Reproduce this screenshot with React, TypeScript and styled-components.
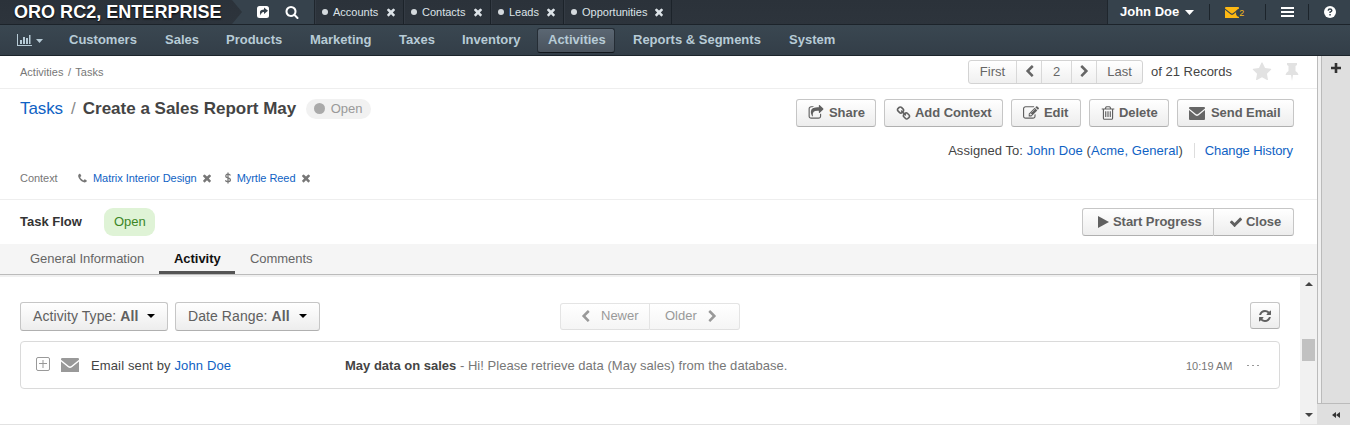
import React from "react";
import styled, { createGlobalStyle } from "styled-components";

const Global = createGlobalStyle`
  * { box-sizing: border-box; }
  body {
    margin: 0;
    background: #fff;
    font: 13px/18px "Liberation Sans", Arial, sans-serif;
    color: #444;
    overflow: hidden;
  }
`;

/* ---------- icons ---------- */

const paths = {
  times: "M1490 1322q0 40-28 68l-136 136q-28 28-68 28t-68-28l-294-294-294 294q-28 28-68 28t-68-28l-136-136q-28-28-28-68t28-68l294-294-294-294q-28-28-28-68t28-68l136-136q28-28 68-28t68 28l294 294 294-294q28-28 68-28t68 28l136 136q28 28 28 68t-28 68l-294 294 294 294q28 28 28 68z",
  star: "M1728 647q0 22-26 48l-363 354 86 500q1 7 1 20 0 21-10.5 35.5t-30.5 14.5q-19 0-40-12l-449-236-449 236q-22 12-40 12-21 0-31.5-14.5t-10.5-35.5q0-6 2-20l86-500-364-354q-25-27-25-48 0-37 56-46l502-73 225-455q19-41 49-41t49 41l225 455 502 73q56 9 56 46z",
  search: "M1216 832q0-185-131.5-316.5t-316.5-131.5-316.5 131.5-131.5 316.5 131.5 316.5 316.5 131.5 316.5-131.5 131.5-316.5zm512 832q0 52-38 90t-90 38q-54 0-90-38l-343-342q-179 124-399 124-143 0-273.5-55.5t-225-150-150-225-55.5-273.5 55.5-273.5 150-225 225-150 273.5-55.5 273.5 55.5 225 150 150 225 55.5 273.5q0 220-124 399l343 343q37 37 37 90z",
  check: "M1671 566q0 40-28 68l-724 724-136 136q-28 28-68 28t-68-28l-136-136-362-362q-28-28-28-68t28-68l136-136q28-28 68-28t68 28l294 295 656-657q28-28 68-28t68 28l136 136q28 28 28 68z",
  phone: "M1600 1240q0 27-10 70.5t-21 68.5q-21 50-122 106-94 51-186 51-27 0-53-3.5t-57.5-12.5-47-14.5-55.5-20.5-49-18q-98-35-175-83-127-79-264-216t-216-264q-48-77-83-175-3-9-18-49t-20.5-55.5-14.5-47-12.5-57.5-3.5-53q0-92 51-186 56-101 106-122 25-11 68.5-21t70.5-10q14 0 21 3 18 6 53 76 11 19 30 54t35 63.5 31 53.5q3 4 17.5 25t21.5 35.5 7 28.5q0 20-28.5 50t-62 55-62 53-28.5 46q0 9 5 22.5t8.5 20.5 14 24 11.5 19q76 137 174 235t235 174q2 1 19 11.5t24 14 20.5 8.5 22.5 5q18 0 46-28.5t53-62 55-62 50-28.5q14 0 28.5 7t35.5 21.5 25 17.5q25 15 53.5 31t63.5 35 54 30q70 35 76 53 3 7 3 21z",
  left: "M1427 301l-531 531 531 531q19 19 19 45t-19 45l-166 166q-19 19-45 19t-45-19l-742-742q-19-19-19-45t19-45l742-742q19-19 45-19t45 19l166 166q19 19 19 45t-19 45z",
  right: "M1363 877l-742 742q-19 19-45 19t-45-19l-166-166q-19-19-19-45t19-45l531-531-531-531q-19-19-19-45t19-45l166-166q19-19 45-19t45 19l742 742q19 19 19 45t-19 45z",
  refresh: "M1639 1056q0 5-1 7-64 268-268 434.5t-478 166.5q-146 0-282.5-55t-243.5-157l-129 129q-19 19-45 19t-45-19-19-45v-448q0-26 19-45t45-19h448q26 0 45 19t19 45-19 45l-137 137q71 66 161 102t187 36q134 0 250-65t186-179q11-17 53-117 8-23 30-23h192q13 0 22.5 9.5t9.5 22.5zm25-800v448q0 26-19 45t-45 19h-448q-26 0-45-19t-19-45 19-45l138-138q-148-137-349-137-134 0-250 65t-186 179q-11 17-53 117-8 23-30 23h-199q-13 0-22.5-9.5t-9.5-22.5v-7q65-268 270-434.5t480-166.5q146 0 284 55.5t245 156.5l130-129q19-19 45-19t45 19 19 45z",
  trash: "M704 736v576q0 14-9 23t-23 9h-64q-14 0-23-9t-9-23v-576q0-14 9-23t23-9h64q14 0 23 9t9 23zm256 0v576q0 14-9 23t-23 9h-64q-14 0-23-9t-9-23v-576q0-14 9-23t23-9h64q14 0 23 9t9 23zm256 0v576q0 14-9 23t-23 9h-64q-14 0-23-9t-9-23v-576q0-14 9-23t23-9h64q14 0 23 9t9 23zm128 724v-948h-896v948q0 22 7 40.5t14.5 27 10.5 8.5h832q3 0 10.5-8.5t14.5-27 7-40.5zm-672-1076h448l-48-117q-7-9-17-11h-317q-10 2-17 11zm928 32v64q0 14-9 23t-23 9h-96v948q0 83-47 143.5t-113 60.5h-832q-66 0-113-58.5t-47-141.5v-952h-96q-14 0-23-9t-9-23v-64q0-14 9-23t23-9h309l70-167q15-37 54-63t79-26h320q40 0 79 26t54 63l70 167h309q14 0 23 9t9 23z",
  edit: "M888 1184l116-116-152-152-116 116v56h96v96h56zm440-720q-16-16-33 1l-350 350q-17 17-1 33t33-1l350-350q17-17 1-33zm80 594v190q0 119-84.5 203.5t-203.5 84.5h-832q-119 0-203.5-84.5t-84.5-203.5v-832q0-119 84.5-203.5t203.5-84.5h832q63 0 117 25 15 7 18 23 3 17-9 29l-49 49q-14 14-32 8-23-6-45-6h-832q-66 0-113 47t-47 113v832q0 66 47 113t113 47h832q66 0 113-47t47-113v-126q0-13 9-22l64-64q15-15 35-7t20 29zm-96-738l288 288-672 672h-288v-288zm444 132l-92 92-288-288 92-92q28-28 68-28t68 28l152 152q28 28 28 68t-28 68z",
  share: "M1472 989v259q0 119-84.5 203.5t-203.5 84.5h-832q-119 0-203.5-84.5t-84.5-203.5v-832q0-119 84.5-203.5t203.5-84.5h255q13 0 22.5 9.5t9.5 22.5q0 27-26 32-77 26-133 60-10 4-16 4h-112q-66 0-113 47t-47 113v832q0 66 47 113t113 47h832q66 0 113-47t47-113v-214q0-19 18-29 28-13 54-37 16-16 35-8 21 9 21 29zm237-496l-384 384q-18 19-45 19-12 0-25-5-39-17-39-59v-192h-160q-323 0-438 131-119 137-74 473 3 23-20 34-8 2-12 2-16 0-26-13-10-14-21-31t-39.5-68.5-49.5-99.5-38.5-114-17.5-122q0-49 3.5-91t14-90 28-88 47-81.5 68.5-74 94.5-61.5 124.5-48.5 159.5-30.5 196.5-11h160v-192q0-42 39-59 13-5 25-5 26 0 45 19l384 384q19 19 19 45t-19 45z",
  chain: "M1520 1216q0-40-28-68l-208-208q-28-28-68-28-42 0-72 32 3 3 19 18.5t21.5 21.5 15 19 13 25.5 3.5 27.5q0 40-28 68t-68 28q-15 0-27.5-3.5t-25.5-13-19-15-21.5-21.5-18.5-19q-33 31-33 73 0 40 28 68l206 207q27 27 68 27 40 0 68-26l147-146q28-28 28-67zm-703-705q0-40-28-68l-206-207q-28-28-68-28-39 0-68 27l-147 146q-28 28-28 67 0 40 28 68l208 208q27 27 68 27 42 0 72-31-3-3-19-18.5t-21.5-21.5-15-19-13-25.5-3.5-27.5q0-40 28-68t68-28q15 0 27.5 3.5t25.5 13 19 15 21.5 21.5 18.5 19q33-31 33-73zm895 705q0 120-85 203l-147 146q-83 83-203 83-121 0-204-85l-206-207q-83-83-83-203 0-123 88-209l-88-88q-86 88-208 88-120 0-204-84l-208-208q-84-84-84-204t85-203l147-146q83-83 203-83 121 0 204 85l206 207q83 83 83 203 0 123-88 209l88 88q86-88 208-88 120 0 204 84l208 208q84 84 84 204z",
};

const Svg = styled.svg<{ $ml?: number; $mr?: number; $mt?: number }>`
  display: block;
  flex: none;
  margin: ${(p) => p.$mt || 0}px ${(p) => p.$mr || 0}px 0 ${(p) => p.$ml || 0}px;
`;

type IconProps = { size?: number; color?: string; ml?: number; mr?: number; mt?: number };

const Icon = ({ name, size = 14, color = "currentColor", ml, mr, mt }: IconProps & { name: keyof typeof paths }) => (
  <Svg $ml={ml} $mr={mr} $mt={mt} width={size} height={size} viewBox="0 0 1792 1792" fill={color}>
    <path d={paths[name]} />
  </Svg>
);

const Envelope = ({ size = 16, color = "#666", ml, mr, mt }: IconProps) => (
  <Svg $ml={ml} $mr={mr} $mt={mt} width={size} height={(size * 13) / 16} viewBox="0 0 16 13" fill={color}>
    <path d="M1 0h14a1 1 0 0 1 1 1v.6L9.1 7.1Q8 7.9 6.900 7.1L0 1.600V1a1 1 0 0 1 1-1z" />
    <path d="M0 3.100l6.300 5.200q1.700 1.300 3.400 0L16 3.100V12a1 1 0 0 1-1 1H1a1 1 0 0 1-1-1z" />
  </Svg>
);

const Caret = ({ color = "#000", w = 8, h = 4, up, ml, mr, mt }: IconProps & { w?: number; h?: number; up?: boolean }) => (
  <Svg $ml={ml} $mr={mr} $mt={mt} width={w} height={h} viewBox="0 0 8 4" preserveAspectRatio="none" fill={color}>
    <path d={up ? "M0 4L4 0L8 4z" : "M0 0H8L4 4z"} />
  </Svg>
);

/* ---------- header ---------- */

const TopBar = styled.header`
  display: flex;
  height: 25px;
  background: linear-gradient(#2b323a, #2d343c);
  border-bottom: 1px solid #1c232a;
  color: #fff;
`;

const Logo = styled.div`
  width: 232px;
  padding-left: 14px;
  font: bold 18px/24px "Liberation Sans", Arial, sans-serif;
  letter-spacing: 0.03px;
  white-space: nowrap;
  text-shadow: 0 1px 2px #000;
`;

const QuickTools = styled.div`
  display: flex;
  align-items: center;
  width: 83px;
  padding-left: 24px;
  background: #36424c;
  border-right: 1px solid #1f262d;
  clip-path: polygon(0 0, 100% 0, 100% 100%, 0 100%, 10px 50%);
`;

const PinTab = styled.div<{ $w: number }>`
  display: flex;
  align-items: center;
  justify-content: space-between;
  width: ${(p) => p.$w}px;
  height: 24px;
  padding: 0 6px;
  border-right: 1px solid #1c232a;
  border-left: 1px solid #343b44;
  font-size: 11px;
  color: #dde3e8;
`;

const PinLabel = styled.span`
  display: flex;
  align-items: center;
  gap: 5px;
  &::before {
    content: "";
    width: 6px;
    height: 6px;
    border-radius: 50%;
    background: #d5dade;
  }
`;

const UserZone = styled.div`
  display: flex;
  align-items: center;
  width: 243px;
  margin-left: auto;
  padding-left: 12px;
  background: #36424c;
  border-left: 1px solid #1f262d;
  font-weight: bold;
`;

const Divider = styled.i<{ $ml: number }>`
  width: 1px;
  height: 16px;
  margin-left: ${(p) => p.$ml}px;
  background: #1c242b;
`;

const MailBadge = styled.span`
  width: 9px;
  height: 8px;
  margin: 2px 0 0 -3px;
  padding-left: 3px;
  border-radius: 4px;
  background: #36424c;
  font-size: 9px;
  line-height: 8px;
  font-weight: normal;
  color: #f5b91b;
`;

const MainNav = styled.nav`
  display: flex;
  align-items: center;
  height: 31px;
  background: linear-gradient(#3a4751, #333e48);
  border-bottom: 1px solid #1c242b;
  color: #b7cbd6;
  font-weight: bold;
  white-space: nowrap;
`;

const NavItem = styled.a<{ $w: number; $active?: boolean }>`
  width: ${(p) => p.$w}px;
  height: 25px;
  margin-right: ${(p) => (p.$active ? 7 : 0)}px;
  padding-left: 10px;
  line-height: 22px;
  border: 1px solid ${(p) => (p.$active ? "#252d35" : "transparent")};
  border-bottom-color: ${(p) => (p.$active ? "#12171c" : "transparent")};
  border-radius: 3px;
  background: ${(p) => (p.$active ? "linear-gradient(#5b6773, #4a535d)" : "none")};
`;

const DashboardLink = styled.a`
  display: flex;
  align-items: center;
  width: 58px;
  padding-left: 17px;
`;

/* ---------- page ---------- */

const Body = styled.div`
  display: flex;
  height: 369px;
`;

const Page = styled.main`
  width: 1317px;
  display: flex;
  flex-direction: column;
`;

const Side = styled.aside`
  display: flex;
  flex-direction: column;
  width: 33px;
`;

const SideTop = styled.div`
  flex: 1;
  padding: 6px 0 0 9px;
  border-left: 1px solid #bbb;
  background: linear-gradient(90deg, #f1f1f1 3px, #bbb 3px, #bbb 4px, #dfdfdf 4px);
`;

const SideBottom = styled.div`
  display: flex;
  align-items: center;
  height: 22px;
  padding-left: 15px;
  border-top: 1px solid #bbb;
  background: #dfdfdf;
`;

const CrumbRow = styled.div`
  display: flex;
  align-items: center;
  height: 33px;
  padding: 0 18px 1px 20px;
  border-bottom: 1px solid #eee;
`;

const Crumbs = styled.span`
  margin-right: auto;
  font-size: 11px;
  word-spacing: 1.5px;
  color: #777;
`;

const Pager = styled.div`
  display: flex;
  height: 24px;
  margin-right: 8px;
  border: 1px solid #d3d3d3;
  border-radius: 3px;
  background: linear-gradient(#fff, #f0f0f0);
`;

const PagerCell = styled.span<{ $w: number }>`
  display: flex;
  align-items: center;
  justify-content: center;
  width: ${(p) => p.$w}px;
  color: #666;
  & + & { border-left: 1px solid #d8d8d8; }
`;

const RecordCount = styled.span`
  width: 101px;
  white-space: nowrap;
`;

const Summary = styled.section`
  display: flex;
  flex-direction: column;
  height: 111px;
  padding: 10px 23px 0 20px;
  border-bottom: 1px solid #eee;
`;

const TitleRow = styled.div`
  display: flex;
  height: 28px;
`;

const Title = styled.h1`
  display: flex;
  margin: 0;
  font-size: 17px;
  line-height: 19px;
  font-weight: normal;
  white-space: nowrap;
  gap: 7px;
  color: #888;
`;

const TitleLink = styled.a`
  width: 44px;
  letter-spacing: -0.1px;
  color: #0f62c4;
`;

const TitleName = styled.b`
  width: 213px;
  color: #444;
`;

const StatusPill = styled.span`
  display: flex;
  align-items: center;
  width: 65px;
  height: 20px;
  margin-left: 10px;
  padding-left: 8px;
  gap: 6px;
  border-radius: 10px;
  background: #f1f1f1;
  color: #999;
  &::before {
    content: "";
    width: 11px;
    height: 11px;
    margin-top: -2px;
    border-radius: 50%;
    background: #aaa;
  }
`;

const Actions = styled.div`
  display: flex;
  gap: 8px;
  margin-left: auto;
`;

const Button = styled.button<{ $w: number; $h?: number; $pl?: number; $soft?: boolean; $side?: "left" | "right" }>`
  display: flex;
  align-items: center;
  width: ${(p) => p.$w}px;
  height: ${(p) => p.$h || 28}px;
  padding: 0 0 1px ${(p) => p.$pl ?? 11}px;
  border: 1px solid ${(p) => (p.$soft ? "#e4e4e4" : "#c6c6c6")};
  border-bottom-color: ${(p) => (p.$soft ? "#e0e0e0" : "#b0b0b0")};
  border-radius: ${(p) => (p.$side === "left" ? "3px 0 0 3px" : p.$side === "right" ? "0 3px 3px 0" : "3px")};
  ${(p) => p.$side === "right" && "border-left: 0;"}
  background: linear-gradient(#fff, ${(p) => (p.$soft ? "#f5f5f5" : "#ededed")});
  color: ${(p) => (p.$soft ? "#999" : "#606060")};
  font: ${(p) => (p.$soft ? "normal" : "bold")} 13px/18px "Liberation Sans", Arial, sans-serif;
  letter-spacing: ${(p) => (p.$soft ? 0 : -0.06)}px;
  white-space: nowrap;
`;

const FilterButton = styled(Button)`
  margin-right: 7px;
  font-weight: normal;
  font-size: 14px;
  letter-spacing: 0.08px;
`;

const OwnerRow = styled.div`
  display: flex;
  justify-content: flex-end;
  margin-top: 15px;
  padding-right: 1px;
  white-space: pre;
`;

const Owner = styled.span`
  letter-spacing: 0.06px;
`;

const Link = styled.a`
  color: #0f62c4;
`;

const History = styled(Link)`
  height: 15px;
  margin: 1px 0 0 11px;
  padding-left: 10px;
  line-height: 16px;
  letter-spacing: -0.1px;
  border-left: 1px solid #ddd;
`;

const ContextRow = styled.div`
  display: flex;
  align-items: center;
  height: 18px;
  margin-top: 9px;
  font-size: 11px;
  letter-spacing: -0.04px;
  color: #777;
`;

const ContextLabel = styled.span`
  width: 57px;
`;

const Flow = styled.section`
  display: flex;
  align-items: center;
  height: 44px;
  padding: 0 23px 0 20px;
`;

const FlowName = styled.b`
  width: 84px;
  color: #333;
`;

const FlowStep = styled.span`
  padding: 0 10px;
  width: 51px;
  height: 28px;
  line-height: 27px;
  border-radius: 9px;
  background: #dff3d6;
  color: #3c8626;
`;

const ButtonGroup = styled.div`
  display: flex;
  margin-left: auto;
`;

const Tabs = styled.div`
  display: flex;
  height: 31px;
  padding-left: 15px;
  border-bottom: 1px solid #bbb;
  background: #f5f5f5;
`;

const Tab = styled.a<{ $w: number; $active?: boolean }>`
  width: ${(p) => p.$w}px;
  height: 30px;
  padding-left: 15px;
  line-height: 29px;
  letter-spacing: -0.04px;
  white-space: nowrap;
  color: ${(p) => (p.$active ? "#111" : "#666")};
  font-weight: ${(p) => (p.$active ? "bold" : "normal")};
  border-bottom: ${(p) => (p.$active ? "3px solid #555" : "0")};
`;

const Scroller = styled.div`
  display: flex;
  height: 150px;
  border-top: 2px solid #f0f0f0;
  border-bottom: 1px solid #e2e2e2;
`;

const Feed = styled.section`
  width: 1300px;
  padding: 25px 20px 0;
`;

const FeedBar = styled.div`
  display: flex;
  height: 39px;
`;

const FeedNav = styled.div`
  display: flex;
  margin: 1px 0 0 233px;
`;

const FeedItem = styled.article`
  display: flex;
  align-items: center;
  height: 48px;
  padding-left: 15px;
  border: 1px solid #dadada;
  border-radius: 4px;
`;

const Author = styled.span`
  width: 254px;
  margin: 2px 0 0 12px;
  letter-spacing: 0.13px;
`;

const Subject = styled.span`
  width: 841px;
  margin-top: 2px;
  letter-spacing: 0.03px;
  color: #777;
  b { color: #444; letter-spacing: 0; }
`;

const Time = styled.span`
  width: 61px;
  margin-top: 2px;
  font-size: 11px;
  color: #777;
`;

const ScrollTrack = styled.div`
  display: flex;
  flex-direction: column;
  align-items: center;
  width: 17px;
  background: #f1f1f1;
`;

const ScrollThumb = styled.div`
  width: 13px;
  height: 22px;
  margin: 53px 0 52px;
  background: #c1c1c1;
`;

const pins: [string, number][] = [["Accounts", 89], ["Contacts", 87], ["Leads", 73], ["Opportunities", 108]];
const nav: [string, number][] = [
  ["Customers", 96], ["Sales", 61], ["Products", 84], ["Marketing", 89], ["Taxes", 63],
  ["Inventory", 86], ["Activities", 78], ["Reports & Segments", 156], ["System", 70],
];

export default function App() {
  return (
    <>
      <Global />
      <TopBar>
        <Logo>ORO RC2, ENTERPRISE</Logo>
        <QuickTools>
          <Svg width="14" height="14" viewBox="0 0 14 14">
            <rect x="1" y="1" width="12" height="12" rx="2.500" fill="#fff" />
            <path d="M8 2.500L12 5.800L8 9V7Q5 6.800 4.800 10.500Q2 4.800 8 4.600z" fill="#36424c" />
          </Svg>
          <Icon name="search" size={14} ml={15} />
        </QuickTools>
        {pins.map(([label, w]) => (
          <PinTab key={label} $w={w}>
            <PinLabel>{label}</PinLabel>
            <Icon name="times" size={12} />
          </PinTab>
        ))}
        <UserZone>
          John Doe
          <Caret color="#fff" w={9} h={5} ml={6} />
          <Divider $ml={15} />
          <Envelope color="#fdb813" size={14} ml={15} mt={1} />
          <MailBadge>2</MailBadge>
          <Divider $ml={20} />
          <Svg $ml={15} width="13" height="11" viewBox="0 0 13 11" fill="#fff">
            <path d="M0 0h13v2H0zM0 4h13v2H0zM0 8h13v2H0z" />
          </Svg>
          <Divider $ml={14} />
          <Svg $ml={15} width="12" height="12" viewBox="0 0 12 12">
            <circle cx="6" cy="6" r="6" fill="#fff" />
            <path d="M4.200 4.600Q4.300 2.900 6 2.900T7.800 4.500Q7.800 5.400 6.100 6.100V7" fill="none" stroke="#36424c" strokeWidth="1.500" />
            <path d="M5.300 8h1.500v1.500H5.300z" fill="#36424c" />
          </Svg>
        </UserZone>
      </TopBar>

      <MainNav>
        <DashboardLink>
          <Svg width="15" height="12" viewBox="0 0 15 12" fill="#b7cbd6">
            <path d="M0 0h1v11h14v1H0zM3 6h2v4H3zM6 3h2v7H6zM9 4h2v6H9zM12 1h1.500v9H12z" />
          </Svg>
          <Caret color="#b7cbd6" w={7} h={4} ml={4} mt={2} />
        </DashboardLink>
        {nav.map(([label, w]) => (
          <NavItem key={label} $w={w} $active={label === "Activities"}>{label}</NavItem>
        ))}
      </MainNav>

      <Body>
        <Page>
          <CrumbRow>
            <Crumbs>Activities / Tasks</Crumbs>
            <Pager>
              <PagerCell $w={47}>First</PagerCell>
              <PagerCell $w={25}><Icon name="left" size={13} /></PagerCell>
              <PagerCell $w={30}>2</PagerCell>
              <PagerCell $w={25}><Icon name="right" size={13} /></PagerCell>
              <PagerCell $w={46}>Last</PagerCell>
            </Pager>
            <RecordCount>of 21 Records</RecordCount>
            <Icon name="star" size={20} color="#e2e2e2" />
            <Svg $ml={13} width="14" height="18" viewBox="0 0 14 18" fill="#e2e2e2">
              <path d="M2 0h10v2l-1.500 1v5Q13 9.500 13.500 12H8l-1 6-1-6H.5Q1 9.500 3.500 8V3L2 2z" />
            </Svg>
          </CrumbRow>

          <Summary>
            <TitleRow>
              <Title>
                <TitleLink>Tasks</TitleLink>/<TitleName>Create a Sales Report May</TitleName>
              </Title>
              <StatusPill>Open</StatusPill>
              <Actions>
                <Button $w={80}><Icon name="share" size={16} mr={5} mt={1} />Share</Button>
                <Button $w={119}><Icon name="chain" size={15} mr={4} mt={1} />Add Context</Button>
                <Button $w={70}><Icon name="edit" size={16} mr={5} mt={1} />Edit</Button>
                <Button $w={80} $pl={10}><Icon name="trash" size={16} mr={3} mt={1} />Delete</Button>
                <Button $w={117}><Envelope mr={6} mt={2} />Send Email</Button>
              </Actions>
            </TitleRow>
            <OwnerRow>
              <Owner>Assigned To: <Link>John Doe</Link> (<Link>Acme, General</Link>)</Owner>
              <History>Change History</History>
            </OwnerRow>
            <ContextRow>
              <ContextLabel>Context</ContextLabel>
              <Icon name="phone" size={11} mr={5} />
              <Link>Matrix Interior Design</Link>
              <Icon name="times" size={12} ml={4} mr={12} />
              <Svg $mr={6} width="6" height="12" viewBox="0 0 6 12" fill="none" stroke="#777" strokeWidth="1.300">
                <path d="M3 .5v11M5.400 3.500Q5 2.200 3 2.200T.7 4Q.7 5.500 3 5.900T5.400 7.900Q5.400 9.700 3 9.700T.5 8.300" />
              </Svg>
              <Link>Myrtle Reed</Link>
              <Icon name="times" size={12} ml={4} />
            </ContextRow>
          </Summary>

          <Flow>
            <FlowName>Task Flow</FlowName>
            <FlowStep>Open</FlowStep>
            <ButtonGroup>
              <Button $w={132} $pl={15} $side="left">
                <Svg $mr={4} width="11" height="12" viewBox="0 0 11 12" fill="#606060"><path d="M0 0L11 6L0 12z" /></Svg>
                Start Progress
              </Button>
              <Button $w={80} $pl={15} $side="right"><Icon name="check" size={14} mr={3} />Close</Button>
            </ButtonGroup>
          </Flow>

          <Tabs>
            <Tab $w={144}>General Information</Tab>
            <Tab $w={76} $active>Activity</Tab>
            <Tab $w={100}>Comments</Tab>
          </Tabs>

          <Scroller>
            <Feed>
              <FeedBar>
                <FilterButton $w={148} $h={29} $pl={12}>Activity Type:&nbsp;<b>All</b><Caret ml={9} /></FilterButton>
                <FilterButton $w={145} $h={29} $pl={12}>Date Range:&nbsp;<b>All</b><Caret ml={9} /></FilterButton>
                <FeedNav>
                  <Button $w={90} $h={27} $pl={18} $soft $side="left"><Icon name="left" size={13} mr={9} />Newer</Button>
                  <Button $w={90} $h={27} $pl={15} $soft $side="right">Older<Icon name="right" size={13} ml={9} /></Button>
                </FeedNav>
                <Actions>
                  <Button $w={30} $h={27} $pl={7}><Icon name="refresh" size={14} mt={1} /></Button>
                </Actions>
              </FeedBar>
              <FeedItem>
                <Svg $mt={-3} width="14" height="14" viewBox="0 0 14 14" fill="none" stroke="#999">
                  <rect x=".5" y=".5" width="13" height="13" rx="1.500" />
                  <path d="M3 6.500h8M7 3v8" />
                </Svg>
                <Envelope size={18} color="#999" ml={11} />
                <Author>Email sent by <Link>John Doe</Link></Author>
                <Subject><b>May data on sales</b> - Hi! Please retrieve data (May sales) from the database.</Subject>
                <Time>10:19 AM</Time>
                <Svg width="12" height="1" viewBox="0 0 12 1" fill="#999"><path d="M0 0h2v1H0zM5 0h2v1H5zM10 0h2v1h-2z" /></Svg>
              </FeedItem>
            </Feed>
            <ScrollTrack>
              <Caret up color="#444" mt={5} />
              <ScrollThumb />
              <Caret color="#444" />
            </ScrollTrack>
          </Scroller>
        </Page>

        <Side>
          <SideTop>
            <Svg $ml={4} $mt={1} width="10" height="10" viewBox="0 0 10 10" fill="#333"><path d="M3.700 0h2.600v3.700H10v2.600H6.300V10H3.700V6.300H0V3.700h3.700z" /></Svg>
          </SideTop>
          <SideBottom>
            <Svg width="8" height="6" viewBox="0 0 8 6" fill="#333"><path d="M0 3L4 0V6zM4 3L8 0V6z" /></Svg>
          </SideBottom>
        </Side>
      </Body>
    </>
  );
}
